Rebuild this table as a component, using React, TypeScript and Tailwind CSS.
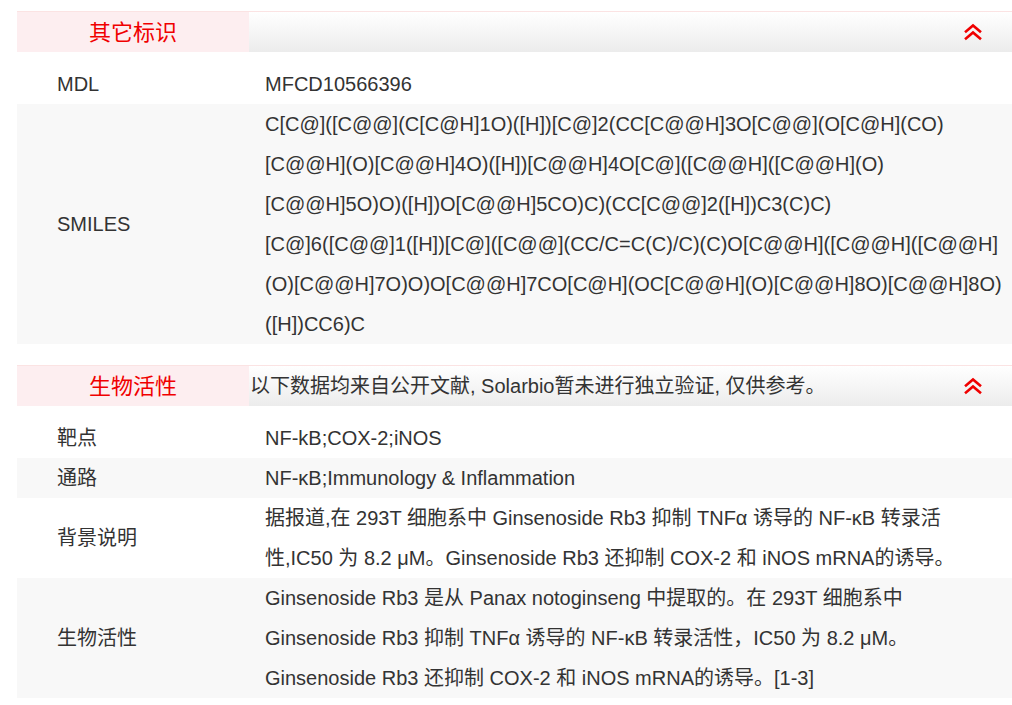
import React from "react";

const FONT = {
  fontFamily: '"Liberation Sans", Arial, "Noto Sans CJK SC", sans-serif',
};

const ChevronsUp = () => (
  <svg width="18" height="18" viewBox="0 0 18 18" fill="none" stroke="#f00000" strokeWidth="2.6" strokeLinecap="square">
    <polyline points="2,8.5 9,2.5 16,8.5" />
    <polyline points="2,15.5 9,9.5 16,15.5" />
  </svg>
);

interface HeaderProps {
  title: string;
  note?: string;
}

const SectionHeader: React.FC<HeaderProps> = ({ title, note }) => (
  <div className="flex h-[41px] border-t border-[#fbe3e3]">
    <div className="w-[232px] shrink-0 bg-[#fdeef0] flex items-center justify-center text-[22px] text-[#f00000]">
      {title}
    </div>
    <div className="flex-1 flex items-center justify-between bg-gradient-to-b from-white to-[#ececec] pr-[30px]">
      <span className="text-[20px] text-[#333] pl-px">{note}</span>
      <ChevronsUp />
    </div>
  </div>
);

interface RowProps {
  label: string;
  lines: string[];
  grey?: boolean;
}

const Row: React.FC<RowProps> = ({ label, lines, grey }) => (
  <div className={`flex items-center ${grey ? "bg-[#f8f8f8]" : "bg-white"}`}>
    <div className="w-[248px] shrink-0 pl-[40px] text-[20px]">{label}</div>
    <div className="flex-1 text-[20px] leading-[40px] whitespace-nowrap">
      {lines.map((l, i) => (
        <div key={i}>{l}</div>
      ))}
    </div>
  </div>
);

export default function App() {
  return (
    <div className="bg-white w-[1012px] h-[705px] overflow-hidden pl-[17px] pt-[11px] text-[#333]" style={FONT}>
      <SectionHeader title="其它标识" />
      <div className="mt-[12px]">
        <Row label="MDL" lines={["MFCD10566396"]} />
        <Row
          grey
          label="SMILES"
          lines={[
            "C[C@]([C@@](C[C@H]1O)([H])[C@]2(CC[C@@H]3O[C@@](O[C@H](CO)",
            "[C@@H](O)[C@@H]4O)([H])[C@@H]4O[C@]([C@@H]([C@@H](O)",
            "[C@@H]5O)O)([H])O[C@@H]5CO)C)(CC[C@@]2([H])C3(C)C)",
            "[C@]6([C@@]1([H])[C@]([C@@](CC/C=C(C)/C)(C)O[C@@H]([C@@H]([C@@H]",
            "(O)[C@@H]7O)O)O[C@@H]7CO[C@H](OC[C@@H](O)[C@@H]8O)[C@@H]8O)",
            "([H])CC6)C",
          ]}
        />
      </div>
      <div className="mt-[21px]">
        <SectionHeader title="生物活性" note="以下数据均来自公开文献, Solarbio暂未进行独立验证, 仅供参考。" />
      </div>
      <div className="mt-[12px]">
        <Row label="靶点" lines={["NF-kB;COX-2;iNOS"]} />
        <Row grey label="通路" lines={["NF-κB;Immunology & Inflammation"]} />
        <Row
          label="背景说明"
          lines={[
            "据报道,在 293T 细胞系中 Ginsenoside Rb3 抑制 TNFα 诱导的 NF-κB 转录活",
            "性,IC50 为 8.2 μM。Ginsenoside Rb3 还抑制 COX-2 和 iNOS mRNA的诱导。",
          ]}
        />
        <Row
          grey
          label="生物活性"
          lines={[
            "Ginsenoside Rb3 是从 Panax notoginseng 中提取的。在 293T 细胞系中",
            "Ginsenoside Rb3 抑制 TNFα 诱导的 NF-κB 转录活性，IC50 为 8.2 μM。",
            "Ginsenoside Rb3 还抑制 COX-2 和 iNOS mRNA的诱导。[1-3]",
          ]}
        />
      </div>
    </div>
  );
}
